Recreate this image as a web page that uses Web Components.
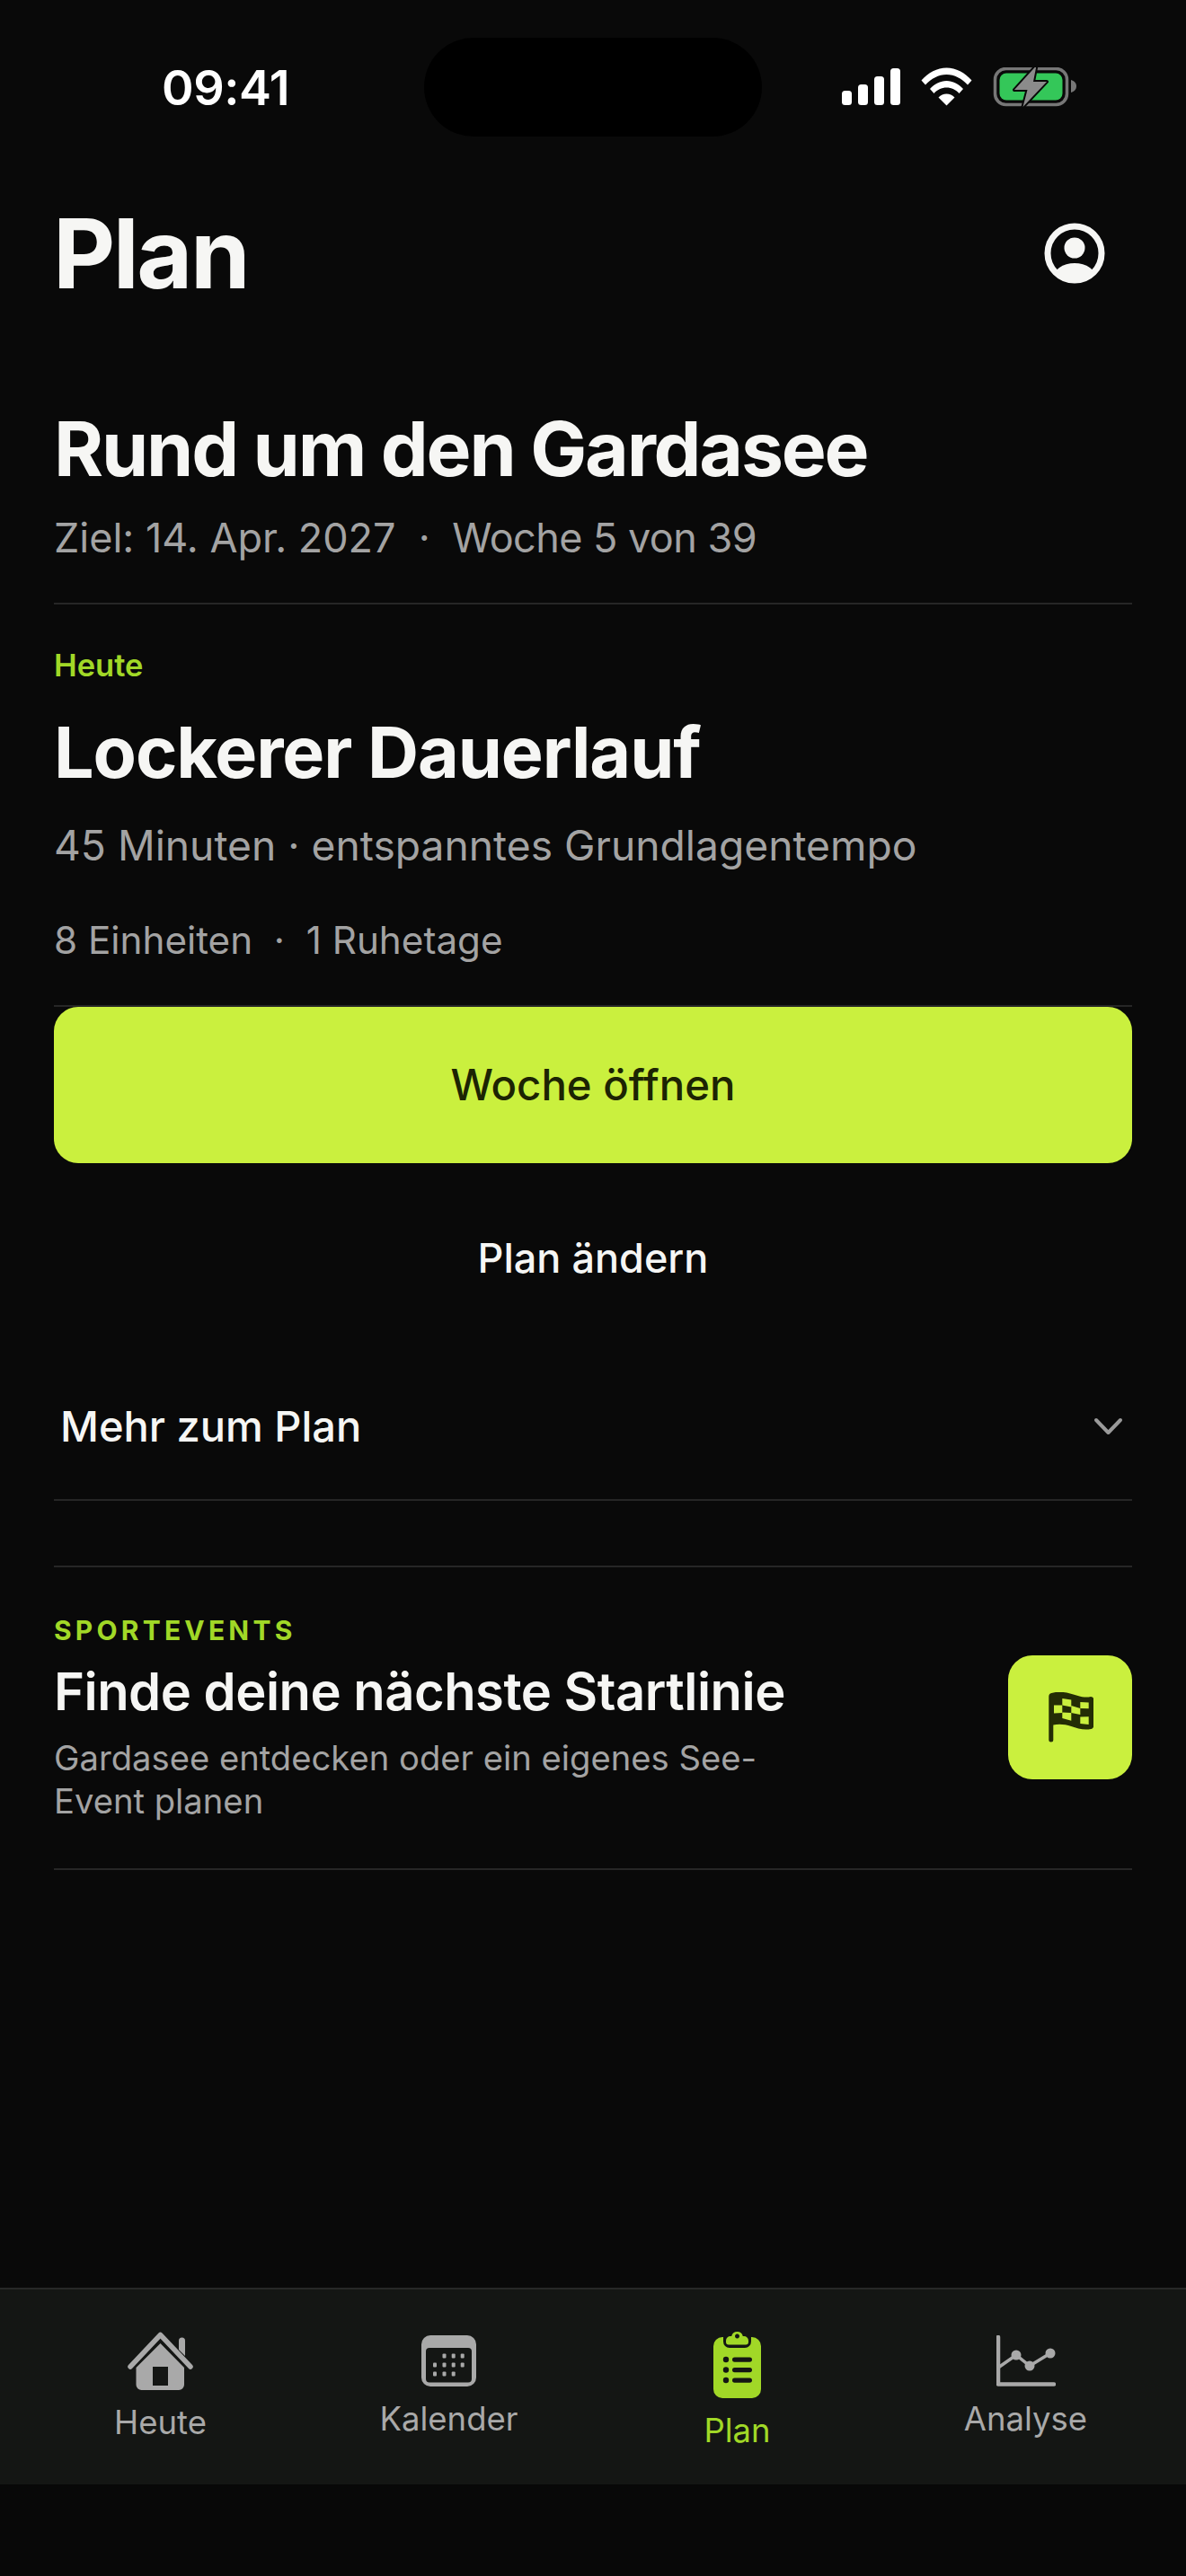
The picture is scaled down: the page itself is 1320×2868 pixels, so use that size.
<!DOCTYPE html>
<html lang="de"><head><meta charset="utf-8"><title>Plan</title>
<style>
html,body{margin:0;padding:0;background:#090909}
body{font-family:Inter,"Liberation Sans",sans-serif;color:#f6f6f4}
</style></head><body>
<app-screen>
  <status-bar></status-bar>
  <plan-header></plan-header>
  <goal-block></goal-block>
  <today-card></today-card>
  <plan-actions></plan-actions>
  <more-row></more-row>
  <event-promo></event-promo>
  <tab-bar slot="tabs">
    <tab-item label="Heute" icon="home"></tab-item>
    <tab-item label="Kalender" icon="calendar"></tab-item>
    <tab-item label="Plan" icon="plan" active></tab-item>
    <tab-item label="Analyse" icon="chart"></tab-item>
  </tab-bar>
</app-screen>
<script>
function def(name, html){
  customElements.define(name, class extends HTMLElement{
    constructor(){super();this.attachShadow({mode:'open'}).innerHTML=typeof html==='function'?html(this):html;}
  });
}
const ICONS={
home:`<svg width="73" height="65" viewBox="0 0 73 65"><path d="M3 39 36.500 3.500 70 39" fill="none" stroke="#a9a9a9" stroke-width="5.500" stroke-linecap="round" stroke-linejoin="round"/><path d="M57 20V10a3.500 3.500 0 0 1 7 0V27z" fill="#a9a9a9"/><path fill-rule="evenodd" fill="#a9a9a9" d="M36.500 13 63 40V59a6 6 0 0 1-6 6H15.500a6 6 0 0 1-6-6V40zM28 39V60H45V39z"/></svg>`,
calendar:`<svg width="61" height="57" viewBox="0 0 61 57"><rect width="61" height="57" rx="10" fill="#a9a9a9"/><rect x="5" y="14" width="51" height="38.500" rx="4" fill="#141614"/><g fill="#a9a9a9"><rect x="23.500" y="20.500" width="4" height="5" rx="1"/><rect x="33.700" y="20.500" width="4" height="5" rx="1"/><rect x="43.700" y="20.500" width="4" height="5" rx="1"/><rect x="13" y="30.500" width="4" height="5" rx="1"/><rect x="23.500" y="30.500" width="4" height="5" rx="1"/><rect x="33.700" y="30.500" width="4" height="5" rx="1"/><rect x="43.700" y="30.500" width="4" height="5" rx="1"/><rect x="13" y="40.500" width="4" height="5" rx="1"/><rect x="23.500" y="40.500" width="4" height="5" rx="1"/><rect x="33.700" y="40.500" width="4" height="5" rx="1"/></g></svg>`,
plan:`<svg width="53" height="76" viewBox="0 0 53 76"><rect y="8" width="53" height="68" rx="10" fill="#a1d827"/><path d="M11 8H42V13a7 7 0 0 1-7 7H18a7 7 0 0 1-7-7z" fill="#141614"/><path fill="#a1d827" fill-rule="evenodd" d="M19 7h1.200a6.500 6.500 0 0 1 12.600 0H34a5 5 0 0 1 5 5v1.500a3 3 0 0 1-3 3H17a3 3 0 0 1-3-3V12a5 5 0 0 1 5-5zM26.500 4.500a2.500 2.500 0 1 0 .001 0z"/><g fill="#141614"><circle cx="14" cy="33" r="3.200"/><circle cx="14" cy="44.500" r="3.200"/><circle cx="14" cy="56" r="3.200"/><rect x="21" y="30.500" width="22" height="5.200" rx="2.600"/><rect x="21" y="42" width="22" height="5.200" rx="2.600"/><rect x="21" y="53.500" width="22" height="5.200" rx="2.600"/></g></svg>`,
chart:`<svg width="66" height="57" viewBox="0 0 66 57"><path d="M2 2V54.500H64" fill="none" stroke="#a9a9a9" stroke-width="4.500" stroke-linecap="round" stroke-linejoin="round"/><path d="M2 36 22 22 37 34 60 20" fill="none" stroke="#a9a9a9" stroke-width="3.500"/><g fill="#a9a9a9"><circle cx="22" cy="22" r="5.500"/><circle cx="37" cy="34" r="5.500"/><circle cx="60" cy="20" r="5.500"/></g></svg>`
};
def('app-screen',`<style>:host{display:flex;flex-direction:column;height:2868px;width:1320px;box-sizing:border-box;background:#090909;overflow:hidden}
main{flex:1;display:flex;flex-direction:column;padding:0 60px;min-height:0}
.strip{height:102px;background:#080808}
</style><main><slot></slot></main><footer><slot name="tabs"></slot><div class="strip"></div></footer>`);
def('status-bar',`<style>:host{display:block;margin:0 -60px;height:194px;box-sizing:border-box;padding-top:42px}
.row{display:flex;align-items:flex-start}
.time{width:142px;margin-left:180px;margin-top:26px;font:600 54px/60px Inter,"Liberation Sans",sans-serif;color:#fff;letter-spacing:-.5px;white-space:nowrap;display:flex;justify-content:center}
.island{width:376px;height:110px;border-radius:55px;background:#000;margin-left:150px}
.icons{margin-left:89px;margin-top:33px;display:flex}
svg{display:block}
</style><div class="row"><div class="time">09:41</div><div class="island"></div><div class="icons">
<svg width="261" height="44" viewBox="937 75 261 44">
<g fill="#fff"><rect x="937" y="101" width="11" height="16" rx="3.500"/><rect x="955" y="94" width="11" height="23" rx="3.500"/><rect x="973" y="85" width="11" height="32" rx="3.500"/><rect x="991" y="76" width="11" height="41" rx="3.500"/>
<path d="M1025.500 89.500C1033 81 1043 75.500 1053.500 75.500S1074 81 1081.500 89.500L1077 94.500C1070.500 87.500 1062.500 83 1053.500 83S1036.500 87.500 1030 94.500Z"/>
<path d="M1035 99C1040 93.500 1046.500 90 1053.500 90S1067 93.500 1072 99L1067.500 104C1064 100 1059 97.500 1053.500 97.500S1043 100 1039.500 104Z"/>
<path d="M1044.500 108.500C1047 106 1050 104.500 1053.500 104.500S1060 106 1062.500 108.500L1053.500 117.500Z"/></g>
<rect x="1107.500" y="76.500" width="80" height="40" rx="12" fill="none" stroke="#777" stroke-width="3.500"/>
<path d="M1192 89c3.500 1 6 3.500 6 7s-2.500 6-6 7z" fill="#777"/>
<rect x="1112.500" y="81.500" width="70" height="30" rx="7.500" fill="#34c759"/>
<path d="M1153.500 73 1129 100h14.500L1138.500 119 1165 91h-15z" fill="#8b8b8b" stroke="#090909" stroke-width="4" stroke-linejoin="round" paint-order="stroke"/>
</svg></div></div>`);
def('plan-header',`<style>:host{display:flex;justify-content:space-between;align-items:center;height:158px;margin-top:9px}
h1{margin:0;font:700 107px/158px Inter,"Liberation Sans",sans-serif;letter-spacing:-2.500px;margin-left:-1px;color:#f6f6f4}
svg{display:block;margin-right:30px}
</style><h1>Plan</h1><svg width="68" height="68" viewBox="0 0 68 68"><defs><clipPath id="c"><circle cx="34" cy="34" r="31"/></clipPath></defs><circle cx="34" cy="34" r="30" fill="none" stroke="#f6f6f4" stroke-width="7"/><circle cx="34" cy="28" r="11.500" fill="#f6f6f4"/><ellipse cx="34" cy="62" rx="24" ry="17" fill="#f6f6f4" clip-path="url(#c)"/></svg>`);
def('goal-block',`<style>:host{display:block;padding-top:89px;border-bottom:2px solid #262626;height:312px;box-sizing:border-box}
h2{margin:0;font:700 84px/100px Inter,"Liberation Sans",sans-serif;letter-spacing:-2.200px;color:#f6f6f4;white-space:nowrap}
p{margin:21px 0 0;font:400 45px/56px Inter,"Liberation Sans",sans-serif;color:#a3a3a3;white-space:pre}
p span{letter-spacing:-.55px;margin-left:-1px}
</style><h2>Rund um den Gardasee</h2><p>Ziel: 14. Apr. 2027  ·  <span>Woche 5 von 39</span></p>`);
def('today-card',`<style>:host{display:block;height:448px;box-sizing:border-box;padding-top:48px;border-bottom:2px solid #262626}
.k{font:600 34.500px/40px Inter,"Liberation Sans",sans-serif;color:#a1d827}
h3{margin:30px 0 0;font:700 79px/92px Inter,"Liberation Sans",sans-serif;letter-spacing:-1.100px;color:#f6f6f4;white-space:nowrap}
.d{margin:28px 0 0;font:400 46.200px/60px Inter,"Liberation Sans",sans-serif;color:#a3a3a3;white-space:nowrap}
.m{margin:48px 0 0;font:400 42.200px/56px Inter,"Liberation Sans",sans-serif;color:#a3a3a3;white-space:pre}
</style><div class="k">Heute</div><h3>Lockerer Dauerlauf</h3><div class="d">45 Minuten · entspanntes Grundlagentempo</div><div class="m">8 Einheiten  ·  1 Ruhetage</div>`);
def('plan-actions',`<style>:host{display:block}
.p{display:flex;align-items:center;justify-content:center;height:174px;border-radius:27px;background:#caf03e;font:500 47.300px/60px Inter,"Liberation Sans",sans-serif;color:#1c2403}
.s{display:flex;align-items:center;justify-content:center;height:212px;font:500 45px/60px Inter,"Liberation Sans",sans-serif;color:#f6f6f4}
</style><div class="p">Woche öffnen</div><div class="s">Plan ändern</div>`);
def('more-row',`<style>:host{display:flex;justify-content:space-between;align-items:center;height:164px;box-sizing:border-box;border-bottom:2px solid #262626;padding:0 10px 0 7px}
span{font:500 47px/60px Inter,"Liberation Sans",sans-serif;color:#f6f6f4}
</style><span>Mehr zum Plan</span><svg width="33" height="20" viewBox="0 0 33 20"><path d="M3 3 16.500 17 30 3" fill="none" stroke="#9a9a9a" stroke-width="4" stroke-linecap="round" stroke-linejoin="round"/></svg>`);
def('event-promo',`<style>:host{display:flex;margin-top:72px;border-top:2px solid #262626;border-bottom:2px solid #262626;height:339px;box-sizing:border-box;padding-top:52px;justify-content:space-between;align-items:flex-start}
.k{font:700 30px/36px Inter,"Liberation Sans",sans-serif;letter-spacing:4.200px;color:#a1d827}
h4{margin:16px 0 0;font:600 57.900px/68px Inter,"Liberation Sans",sans-serif;letter-spacing:-.5px;color:#f6f6f4;white-space:nowrap}
p{margin:16px 0 0;width:840px;font:400 38.200px/48px Inter,"Liberation Sans",sans-serif;color:#a3a3a3}
.box{flex:none;width:138px;height:138px;border-radius:27px;background:#caf03e;display:flex;align-items:center;justify-content:center;margin-top:46px}
svg{display:block}
</style><div><div class="k">SPORTEVENTS</div><h4>Finde deine nächste Startlinie</h4><p>Gardasee entdecken oder ein eigenes See-Event planen</p></div>
<div class="box"><svg width="52" height="56" viewBox="85 65 52 56"><path d="M87.300 70a4 4 0 0 1 3-4C100 63 110 66 118 68.500S130 71 134 70a3.500 3.500 0 0 1 3.300 3V102c0 2-1 3.500-3 4-8 1.500-15-.5-22-3S98 100 92.300 101.500V118a2.500 2.500 0 0 1-5 0z" fill="#242d05"/>
<g fill="#caf03e"><path d="M102.300 72 112.300 73.500V81.500L102.300 79.500z"/><path d="M122.300 76 131.700 76.500V83.300L122.300 83z"/><path d="M93 79.500 102.300 79.500V88L93 88.500z"/><path d="M112.300 80 122.300 83V90L112.300 88z"/><path d="M102.300 87.500 112.300 88V96.700L102.300 94z"/><path d="M122.300 92.500 131.700 92.300V101L122.300 100z"/></g></svg></div>`);
def('tab-bar',`<style>:host{display:flex;height:219px;box-sizing:border-box;background:#141614;border-top:2px solid #272827;padding:0 18px}</style><slot></slot>`);
def('tab-item',el=>{const a=el.hasAttribute('active');return `<style>:host{flex:1;display:flex;flex-direction:column;align-items:center;box-sizing:border-box;justify-content:center;padding-bottom:5px;padding-top:${a?8:0}px;gap:18px}
svg{display:block}
span{font:400 36.500px/36px Inter,"Liberation Sans",sans-serif;color:${a?'#a1d827':'#a9a9a9'}}
</style>${ICONS[el.getAttribute('icon')]}<span>${el.getAttribute('label')}</span>`});
</script>
</body></html>
